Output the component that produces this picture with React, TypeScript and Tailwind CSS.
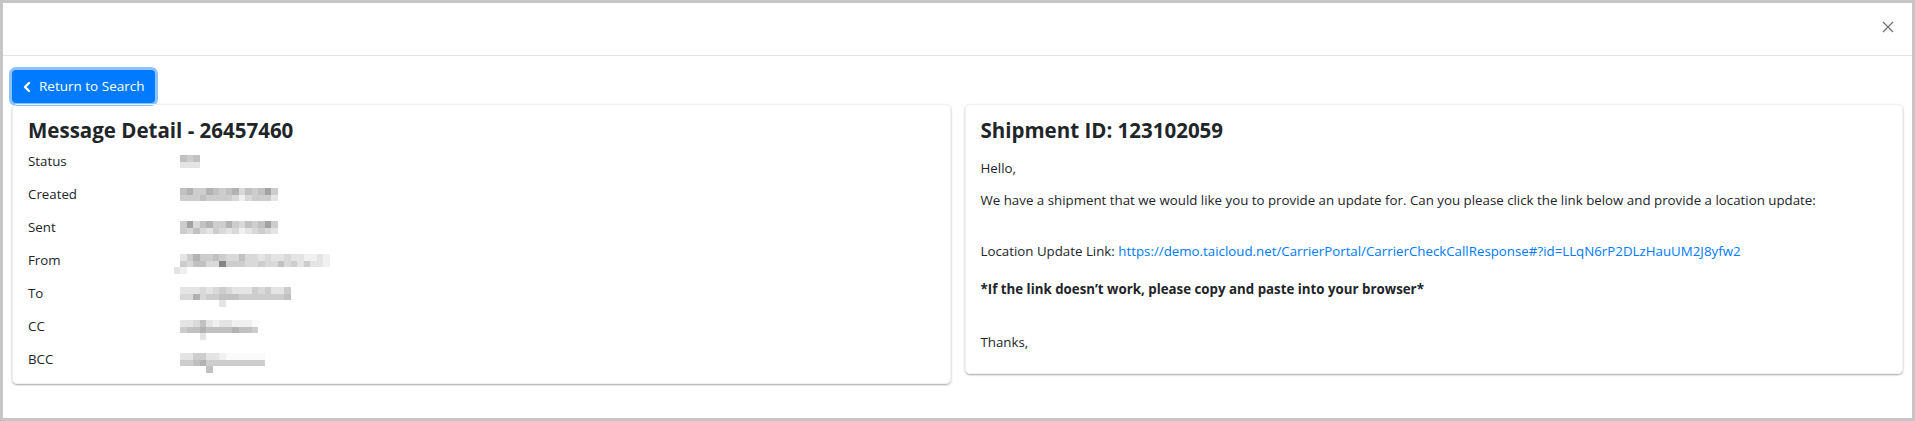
import { ChevronLeft } from 'lucide-react';

// gray levels for the blurred (pixelated) values
const shade: Record<string, string> = {
  ' ': 'bg-transparent',
  '0': 'bg-[#fafafa]',
  '1': 'bg-[#f0f0f0]',
  '2': 'bg-[#e4e4e4]',
  '3': 'bg-[#d9d9d9]',
  '4': 'bg-[#cdcdcd]',
  '5': 'bg-[#c1c1c1]',
  '6': 'bg-[#b3b3b3]',
  '7': 'bg-[#a3a3a3]',
  '8': 'bg-[#858585]',
};

type Row = { label: string; blur: string[]; shift?: boolean };

const rows: Row[] = [
  { label: 'Status', blur: ['545', '222'] },
  { label: 'Created', blur: ['564465456354574', '444544443134442'] },
  { label: 'Sent', blur: ['473564464354574', '435324323123432'] },
  {
    label: 'From',
    shift: true,
    blur: [' 24644543353323223221121', ' 43553384443343353424221', '21'],
  },
  { label: 'To', blur: ['22232343222434224', '33634455544444445', '      2'] },
  { label: 'CC', blur: ['223521221110', '455655556554', '   2'] },
  { label: 'BCC', blur: ['2244221000000', '4456444444444', '    5'] },
];

function Blurred({ lines, shift }: { lines: string[]; shift?: boolean }) {
  return (
    <div className={shift ? 'h-[13px] -ml-[6.5px]' : 'h-[13px]'}>
      {lines.map((line, i) => (
        <div key={i} className="flex">
          {line.split('').map((c, j) => (
            <div key={j} className={`w-[6.5px] h-[6.5px] ${shade[c]}`} />
          ))}
        </div>
      ))}
    </div>
  );
}

export default function App() {
  return (
    <div className="w-[1915px] h-[421px] border-[3px] border-[#c6c6c6] bg-white flex flex-col text-[#212529] font-['Open_Sans',sans-serif]">
      {/* header */}
      <div className="h-[53px] shrink-0 border-b border-[#e3e6e8] flex items-center justify-end pr-[18px] pb-[4px]">
        <svg width="12" height="12" viewBox="0 0 12 12" className="text-[#6c757d]">
          <path d="M1 1 L11 11 M11 1 L1 11" stroke="currentColor" strokeWidth="1.4" fill="none" />
        </svg>
      </div>

      <div className="px-[9px] pt-[14px]">
        <button className="h-[33px] pl-[9px] pr-[10px] flex items-center gap-[4px] rounded-[4px] bg-[#007bff] text-white text-[13.5px] shadow-[0_0_0_3px_#8cc3ff]">
          <ChevronLeft size={16} strokeWidth={3.5} className="-ml-[2px]" />
          <span>Return to Search</span>
        </button>

        <div className="flex items-start gap-[14px] mt-[1px]">
          {/* message detail */}
          <div className="flex-1 rounded-[5px] border border-[#f0f0f0] shadow-[0_1px_2px_rgba(0,0,0,0.35)] px-[15px] pt-[13px] pb-[7px]">
            <h2 className="text-[20.5px] leading-[25px] font-bold mb-[2px]">Message Detail - 26457460</h2>
            {rows.map((r) => (
              <div key={r.label} className="h-[33px] flex items-center text-[13.3px]">
                <div className="w-[152px]">{r.label}</div>
                <Blurred lines={r.blur} shift={r.shift} />
              </div>
            ))}
          </div>

          {/* email body */}
          <div className="flex-1 rounded-[5px] border border-[#f0f0f0] shadow-[0_1px_2px_rgba(0,0,0,0.35)] px-[15px] pt-[13px] pb-[21px] text-[13.3px] leading-[20px]">
            <h2 className="text-[20.5px] leading-[25px] font-bold">Shipment ID: 123102059</h2>
            <p className="mt-[15px]">Hello,</p>
            <p className="mt-[12px]">
              We have a shipment that we would like you to provide an update for. Can you please click the link below and provide a location update:
            </p>
            <p className="mt-[31px]">
              Location Update Link:{' '}
              <a className="text-[#007bff]" href="#">
                https://demo.taicloud.net/CarrierPortal/CarrierCheckCallResponse#?id=LLqN6rP2DLzHauUM2J8yfw2
              </a>
            </p>
            <p className="mt-[18px] font-bold">*If the link doesn’t work, please copy and paste into your browser*</p>
            <p className="mt-[33px]">Thanks,</p>
          </div>
        </div>
      </div>
    </div>
  );
}
